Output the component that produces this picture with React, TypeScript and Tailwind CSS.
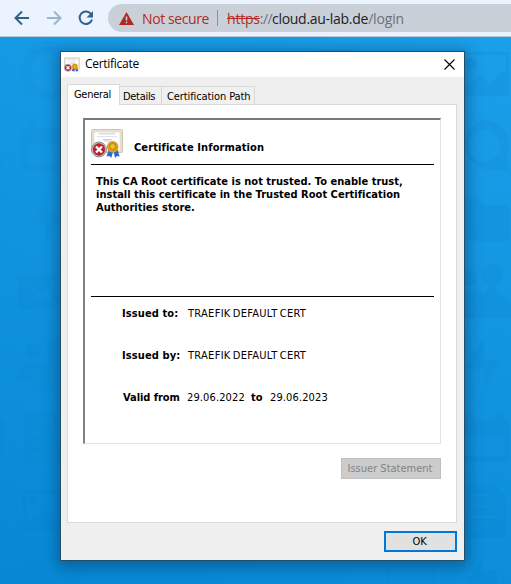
import React from "react";

function BackgroundPattern() {
  return (
    <svg className="absolute inset-0" width="511" height="546" viewBox="0 37 511 546" fill="#0875bd">
      <g opacity="0.07">
        {/* left column */}
        <circle cx="48" cy="73" r="22" fill="none" stroke="#0875bd" strokeWidth="9" />
        <path fillRule="evenodd" d="M26 128h4v5q3 4 6 0v-5h30v43H25q-4 0-4-4v-35q0-4 5-4zM27 145h35v20H27z" />
        <rect x="29" y="120" width="7" height="15" rx="3" />
        <path d="M46 193L30 224h16l-1 19 20-31H47z" />
        <path fillRule="evenodd" d="M18 276q0-2 2-2h42v36H20q-2 0-2-2zM22 277l18 16 20-15-12 15 9 12-11-8-6 3-5-4-10 9 10-12z" />
        <circle cx="33" cy="351" r="8" />
        <path d="M19 380q0-14 9-16l5-3 6 3q6 2 6 13v15H33v-12zM45 342q5-7 17-4v53H35q1-21 14-26z" />
        <path fillRule="evenodd" d="M25 413h40v50H25zM32 421v2h20v-2zM32 433v2h26v-2zM32 444v2h20v-2zM32 454v2h15v-2z" />
        <path fillRule="evenodd" d="M22 490h42v42H22zM26 494v33l8-8 10-10 18 13v-28z" />
        <circle cx="34" cy="501" r="5" />
        <path d="M25 584q0-9 4-11a8 8 0 1 1 9 0q6 3 6 11z" />
        <path d="M0 154q3 4 2 12H0zM0 420h4v34H0z" />
      </g>
      <g opacity="0.12">
        {/* right column */}
        <path fillRule="evenodd" d="M463 52h46v44H463zM465 55v32l16-13 9 11 13-15 3 5V55z" />
        <circle cx="471" cy="64" r="6" />
        <path fillRule="evenodd" d="M484 120a25 25 0 0 1 22 37l4 14-14-2a25 25 0 1 1-12-49zM484 130a16 16 0 1 0 0 32 16 16 0 1 0 0-32z" />
        <path d="M462 197h15l8 8h25v36H462z" />
        <circle cx="470" cy="278" r="8" />
        <path d="M462 307v-13l9-5 13 5q5-3 4-10-7-6-7-9 0-10 11-11 11 1 11 12 0 6-7 10v6q12 4 15 12v14H465z" />
        <path d="M484 338l-20 31h20v21l17-30h-17z" />
        <path fillRule="evenodd" d="M463 420h42l4 5v34q0 3-4 3h-42zM463 436h41v20h-41z" />
        <rect x="465" y="413" width="8" height="15" rx="3" />
        <rect x="495" y="413" width="8" height="15" rx="3" />
        <path fillRule="evenodd" d="M467 485h28l11 12v41h-40zM469 494v2h21v-2zM469 505v2h19v-2zM469 516v2h29v-2zM469 527v2h15v-2z" />
        <path d="M482 557l-15 27h30v-14h-15z" />
      </g>
      <g opacity="0.07">
        {/* slivers around the dialog */}
        <path fillRule="evenodd" d="M387 562h48v22h-48zM390 565v19h42v-19z" />
        <path d="M27 54a23 23 0 0 1 40-2zM317 49h34v5h-34zM120 52q12-9 25 0z" />
      </g>
    </svg>
  );
}

function CertIcon({ size }: { size: number }) {
  return (
    <svg width={size} height={size} viewBox="0 0 32 32" className="shrink-0">
      <rect x=".5" y="1.500" width="31" height="23" rx="1" fill="#e7dfcf" stroke="#cfc4ab" />
      <rect x="3" y="4" width="26" height="18.500" fill="#fdfdfd" stroke="#ddd9cf" strokeWidth=".6" />
      <path d="M8 5.800h16M12 11.500h9M13 13h7" stroke="#b0b8d0" strokeWidth=".7" />
      <path d="M6 8.500h20" stroke="#d3d7e2" strokeWidth=".7" />
      <path d="M18 21l-2.500 7.500 3-.5 1.800 2 2-7 1.800 7 1.800-2 2.800.5-2.500-7.500z" fill="#2a65df" />
      <circle cx="21.700" cy="18.800" r="5.800" fill="#dca019" />
      <circle cx="21.700" cy="18.500" r="3" fill="#efbd38" stroke="#a87208" strokeWidth=".8" />
      <circle cx="8" cy="21.500" r="7.400" fill="#d6d8db" stroke="#81868a" strokeWidth="1" />
      <circle cx="8" cy="21.500" r="5.900" fill="#c61d2c" stroke="#932632" strokeWidth=".6" />
      <path d="M5 18.500l6 6m0-6l-6 6" stroke="#fff" strokeWidth="2.300" />
    </svg>
  );
}

function BrowserBar() {
  return (
    <header className="flex h-[37px] items-start border-b border-[#b8c8dc] bg-[#ebf3fe] font-['Open_Sans',sans-serif] text-[14px]">
      <svg width="108" height="36" viewBox="0 0 108 36" fill="none" strokeWidth="2" className="shrink-0">
        <path d="M29 18H16M22 11.500L15.500 18l6.500 6.500" stroke="#31628c" />
        <path d="M47 18h13M54 11.500l6.500 6.500-6.500 6.500" stroke="#9bb5cf" />
        <path d="M91.200 14.200A6.300 6.300 0 1 0 92 19.500" stroke="#31628c" />
        <path d="M93 11v6.500h-6.500z" fill="#31628c" />
      </svg>
      <div className="mt-1 flex h-7 flex-1 items-center rounded-l-full bg-[#c9d0d8] pl-[11px] whitespace-pre">
        <svg width="15" height="13" viewBox="0 0 15 13" className="mr-2">
          <path d="M7.500 0L15 13H0z" fill="#b02a23" />
          <path d="M7.500 4.500v4M7.500 9.700v1.500" stroke="#c9d0d8" strokeWidth="1.600" />
        </svg>
        <span className="w-[75px] tracking-[-0.4px] text-[#b32b24]">Not secure</span>
        <span className="mr-[9px] h-4 w-px bg-[#8b9096]" />
        <span className="tracking-[-0.2px] text-[#b32b24] line-through">https</span>
        <span className="tracking-[-0.6px] text-[#6b7178]">://</span>
        <span className="tracking-[-0.28px] text-[#202124]">cloud.au-lab.de</span>
        <span className="tracking-[-0.15px] text-[#6b7178]">/login</span>
      </div>
    </header>
  );
}

function Field({ label, value, className }: { label: string; value: string; className: string }) {
  return (
    <div className={"flex h-[13px] pl-[31px] leading-[13px] whitespace-nowrap " + className}>
      <b className="w-[66px] tracking-[0.1px]">{label}</b>
      <span className="tracking-[0.29px] [word-spacing:-1.2px]">{value}</span>
    </div>
  );
}

function CertificateDialog() {
  return (
    <section className="relative mt-[14px] ml-[60px] flex h-[510px] w-[405px] flex-col border border-[#234f6c] bg-[#efefef] font-['DejaVu_Sans_Condensed','DejaVu_Sans',sans-serif] text-[11px] text-black shadow-[0_3px_14px_3px_rgba(0,35,70,0.4)]">
      <div className="flex h-[25px] items-center bg-white pl-[3px]">
        <CertIcon size={16} />
        <span className="mb-[2px] ml-[5px] flex-1 font-['Open_Sans',sans-serif] text-[12px] leading-4 tracking-[-0.28px]">Certificate</span>
        <svg width="11" height="11" viewBox="0 0 11 11" className="mr-[9px]" stroke="#000" strokeWidth="1.100">
          <path d="M.5.5l10 10m0-10l-10 10" />
        </svg>
      </div>
      <div className="flex h-[28px] items-end pl-[6px] leading-[13px] whitespace-nowrap">
        <div className="relative z-10 flex h-[21px] w-[53px] border border-b-0 border-[#d9d9d9] bg-white pt-[3px] pl-[6px] tracking-[-0.3px]">General</div>
        <div className="flex h-[19px] w-[42px] border-t border-r border-[#d9d9d9] bg-[#f0f0f0] pt-[3px] pl-[3px] tracking-[-0.3px]">Details</div>
        <div className="flex h-[19px] w-[93px] border-t border-r border-[#d9d9d9] bg-[#f0f0f0] pt-[3px] pl-[5px] tracking-[-0.1px]">Certification Path</div>
      </div>
      <div className="-mt-px ml-[6px] flex h-[419px] w-[390px] flex-col border border-[#d9d9d9] bg-white pt-[13px] pl-[15px]">
        <div className="h-[326px] w-[358px] border border-t-2 border-l-2 border-t-[#787878] border-r-[#e3e3e3] border-b-[#e3e3e3] border-l-[#828282] pl-[6px]">
          <div className="flex h-[45px] w-[343px] border-b border-black pt-[8px]">
            <CertIcon size={32} />
            <b className="mt-[13px] ml-[11px] h-[13px] leading-[13px] tracking-[0.1px] whitespace-nowrap">Certificate Information</b>
          </div>
          <div className="h-[132px] w-[343px] border-b border-black pt-[10px] pl-[5px] leading-[13px] font-bold tracking-[0.02px] whitespace-nowrap">
            <p>This CA Root certificate is not trusted. To enable trust,</p>
            <p>install this certificate in the Trusted Root Certification</p>
            <p>Authorities store.</p>
          </div>
          <Field label="Issued to:" value="TRAEFIK DEFAULT CERT" className="mt-[10px]" />
          <Field label="Issued by:" value="TRAEFIK DEFAULT CERT" className="mt-[29px]" />
          <div className="mt-[29px] flex h-[13px] pl-[32px] leading-[13px] whitespace-nowrap">
            <b className="w-[64px] tracking-[-0.05px]">Valid from</b>
            <span className="w-[64px] tracking-[0.12px]">29.06.2022</span>
            <b className="w-[19px]">to</b>
            <span className="tracking-[0.12px]">29.06.2023</span>
          </div>
        </div>
        <button disabled className="mt-[14px] ml-[258px] flex h-[21px] w-[100px] items-center justify-center border border-[#bfbfbf] bg-[#cccccc] pt-[2px] pr-[2px] text-[#838383]">Issuer Statement</button>
      </div>
      <button className="mt-[8px] ml-[323px] flex h-[21px] w-[73px] items-center justify-center border-2 border-[#0078d7] bg-[#e1e1e1] pt-[2px] pr-[2px] tracking-[-0.2px]">OK</button>
    </section>
  );
}

export default function App() {
  return (
    <div className="flex h-[584px] w-[511px] flex-col overflow-hidden">
      <BrowserBar />
      <main className="relative flex-1 overflow-hidden bg-[linear-gradient(200deg,#1b9fe9_0%,#1194df_50%,#0788d5_100%)]">
        <BackgroundPattern />
        <CertificateDialog />
      </main>
    </div>
  );
}
